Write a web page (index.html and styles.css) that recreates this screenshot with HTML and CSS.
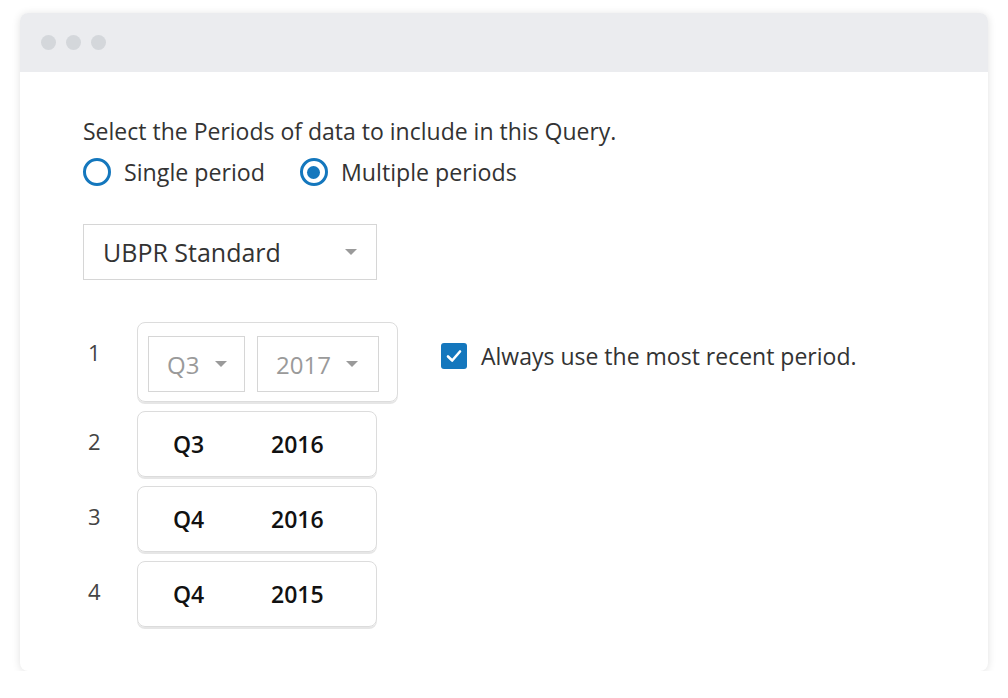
FILE: index.html
```html
<!DOCTYPE html>
<html lang="en">
<head>
  <meta charset="UTF-8" />
  <title>Select Periods</title>
  <link rel="stylesheet" href="styles.css">
</head>
<body>

<div class="ventana">
  <div class="barra">
    <span class="punto"></span>
    <span class="punto"></span>
    <span class="punto"></span>
  </div>

  <div class="contenido">
    <p class="pregunta">Select the Periods of data to include in this Query.</p>

    <div class="radios">
      <label class="radio"><span class="circulo"></span>Single period</label>
      <label class="radio"><span class="circulo marcado"></span>Multiple periods</label>
    </div>

    <div class="selector grande">
      <span>UBPR Standard</span>
      <span class="flecha"></span>
    </div>

    <div class="periodos">
      <div class="fila">
        <span class="num">1</span>
        <div class="caja editando">
          <div class="selector corto"><span>Q3</span><span class="flecha"></span></div>
          <div class="selector anio"><span>2017</span><span class="flecha"></span></div>
        </div>
        <label class="check">
          <span class="cuadro">
            <svg width="20" height="20" viewBox="0 0 20 20"><path d="M4 10.5 L8.2 14.5 L16 5.5" fill="none" stroke="#fff" stroke-width="2.6" stroke-linecap="round" stroke-linejoin="round"/></svg>
          </span>
          Always use the most recent period.
        </label>
      </div>

      <div class="fila">
        <span class="num">2</span>
        <div class="caja"><span class="q">Q3</span><span>2016</span></div>
      </div>
      <div class="fila">
        <span class="num">3</span>
        <div class="caja"><span class="q">Q4</span><span>2016</span></div>
      </div>
      <div class="fila">
        <span class="num">4</span>
        <div class="caja"><span class="q">Q4</span><span>2015</span></div>
      </div>
    </div>
  </div>
</div>

</body>
</html>
```

FILE: styles.css
```css
* { box-sizing: border-box; }
body {
  margin: 0;
  background: #fff;
  font-family: 'Open Sans', sans-serif;
  color: #333;
}

.ventana {
  margin: 13px 0 0 20px;
  width: 968px;
  height: 658px;
  border-radius: 8px;
  overflow: hidden;
  background: #fff;
  box-shadow: 0 1px 8px rgba(0, 0, 0, 0.12);
}

.barra {
  height: 59px;
  background: #ebecef;
  display: flex;
  align-items: center;
  gap: 10px;
  padding-left: 21px;
}

.punto {
  width: 15px;
  height: 15px;
  border-radius: 50%;
  background: #d4d7db;
}

.contenido {
  padding: 45px 0 0 63px;
}

.pregunta {
  margin: 0;
  font-size: 23px;
  line-height: 28px;
}

.radios {
  display: flex;
  gap: 35px;
  margin-top: 13px;
}

.radio {
  display: flex;
  align-items: center;
  gap: 13px;
  font-size: 23.2px;
  line-height: 28px;
}

.circulo {
  width: 28px;
  height: 28px;
  border: 3px solid #1477bd;
  border-radius: 50%;
  display: flex;
  justify-content: center;
  align-items: center;
}

.circulo.marcado::after {
  content: '';
  width: 13px;
  height: 13px;
  border-radius: 50%;
  background: #1477bd;
}

.selector {
  display: flex;
  align-items: center;
  justify-content: space-between;
  border: 1px solid #d6d6d6;
  font-size: 25px;
  background: #fff;
}

.flecha {
  width: 0;
  height: 0;
  border-left: 6px solid transparent;
  border-right: 6px solid transparent;
  border-top: 6px solid #9a9a9a;
}

.selector.grande {
  width: 294px;
  height: 56px;
  margin-top: 38px;
  padding: 0 19px 0 19px;
}

.periodos {
  margin-top: 42px;
  display: flex;
  flex-direction: column;
  gap: 9px;
}

.fila {
  display: flex;
  align-items: flex-start;
}

.num {
  width: 54px;
  padding: 16px 0 0 5px;
  font-size: 22px;
  line-height: 28px;
  color: #444;
}

.caja {
  width: 240px;
  height: 66px;
  border: 1px solid #dcdcdc;
  border-radius: 8px;
  box-shadow: 0 2px 0 #e6e6e6;
  display: flex;
  align-items: center;
  padding-left: 35px;
  font-size: 23px;
  font-weight: 600;
  color: #111;
}

.caja .q {
  width: 98px;
}

.caja.editando {
  width: 261px;
  height: 80px;
  padding: 13px 0 0 10px;
  align-items: flex-start;
  gap: 12px;
  font-weight: 400;
}

.selector.corto,
.selector.anio {
  height: 56px;
  padding: 0 17px 0 18px;
  color: #9a9a9a;
  font-size: 24px;
}

.selector.corto { width: 97px; }
.selector.anio { width: 122px; padding-right: 20px; }

.check {
  display: flex;
  align-items: center;
  gap: 14px;
  margin: 20px 0 0 43px;
  font-size: 23px;
  line-height: 28px;
}

.cuadro {
  width: 26px;
  height: 26px;
  border-radius: 3px;
  background: #1477bd;
  display: flex;
  justify-content: center;
  align-items: center;
}
```
